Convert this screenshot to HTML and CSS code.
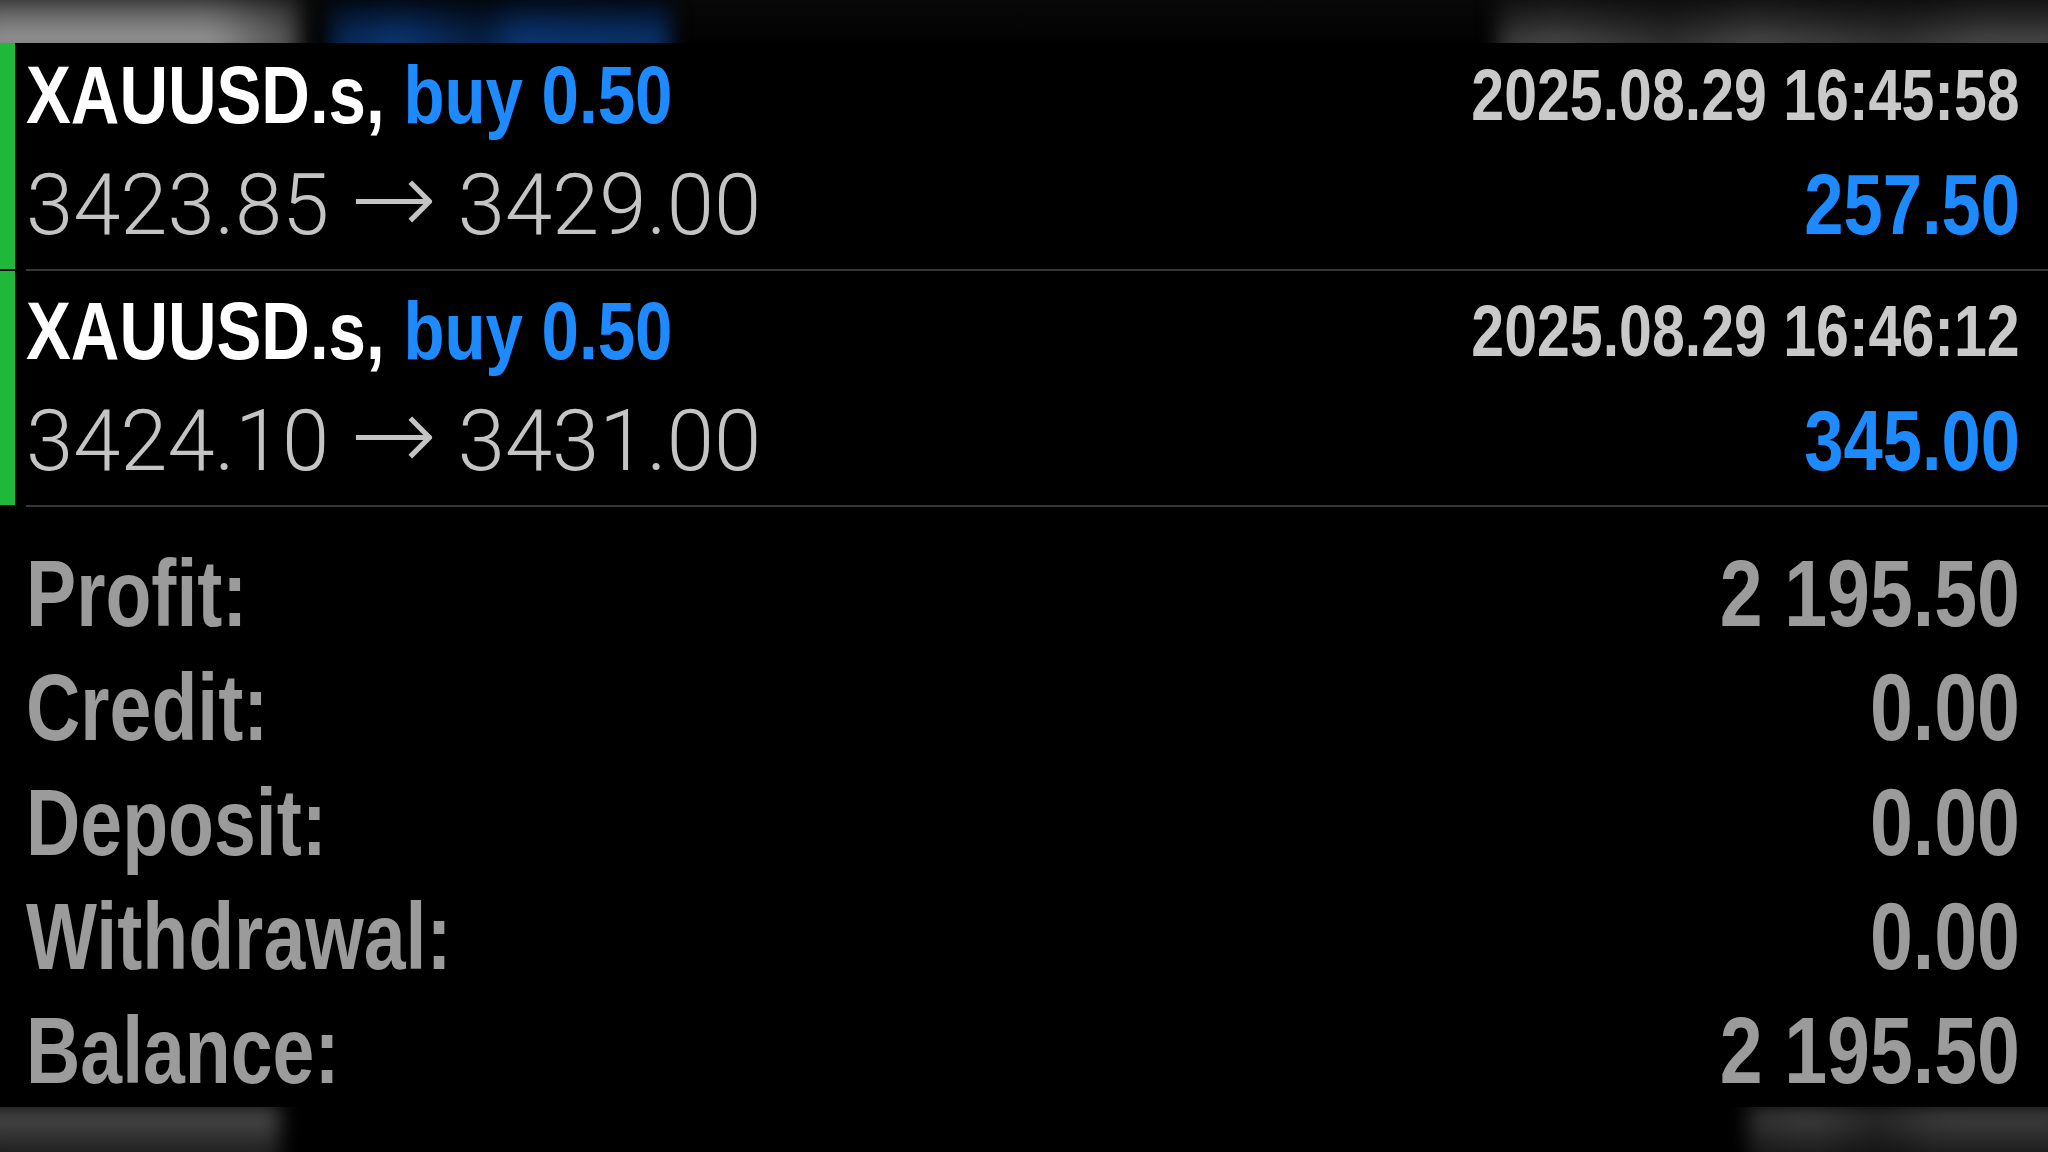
FILE: index.html
```html
<!DOCTYPE html>
<html>
<head>
<meta charset="utf-8">
<link rel="stylesheet" href="styles.css">
</head>
<body>
<div class="screen">
  <div class="ghost ghost-top">
    <div class="blob blob-gray-left"></div>
    <div class="blob blob-blue"></div>
    <div class="spacer"></div>
    <div class="blob blob-gray-right"></div>
  </div>

  <div class="trades">
    <div class="trade">
      <div class="bar"></div>
      <div class="trade-body">
        <div class="line-top">
          <div class="title cond-l"><span class="sym">XAUUSD.s,</span> <span class="side">buy 0.50</span></div>
          <div class="date cond-r">2025.08.29 16:45:58</div>
        </div>
        <div class="line-bottom">
          <div class="prices">3423.85 <span class="arrow">→</span> 3429.00</div>
          <div class="pnl cond-r">257.50</div>
        </div>
      </div>
    </div>
    <div class="trade">
      <div class="bar"></div>
      <div class="trade-body">
        <div class="line-top">
          <div class="title cond-l"><span class="sym">XAUUSD.s,</span> <span class="side">buy 0.50</span></div>
          <div class="date cond-r">2025.08.29 16:46:12</div>
        </div>
        <div class="line-bottom">
          <div class="prices">3424.10 <span class="arrow">→</span> 3431.00</div>
          <div class="pnl cond-r">345.00</div>
        </div>
      </div>
    </div>
  </div>

  <div class="summary">
    <div class="sum-row"><span class="cond-l lbl">Profit:</span><span class="cond-r">2 195.50</span></div>
    <div class="sum-row"><span class="cond-l lbl">Credit:</span><span class="cond-r">0.00</span></div>
    <div class="sum-row"><span class="cond-l lbl">Deposit:</span><span class="cond-r">0.00</span></div>
    <div class="sum-row"><span class="cond-l lbl">Withdrawal:</span><span class="cond-r">0.00</span></div>
    <div class="sum-row"><span class="cond-l lbl">Balance:</span><span class="cond-r">2 195.50</span></div>
  </div>

  <div class="ghost ghost-bottom">
    <div class="blob blob-bl"></div>
    <div class="spacer"></div>
    <div class="blob blob-br"></div>
  </div>
</div>
</body>
</html>
```

FILE: styles.css
```css
html, body {
  margin: 0;
  padding: 0;
  background: #000;
}

.screen {
  position: relative;
  width: 2048px;
  height: 1152px;
  overflow: hidden;
  background: #000;
  font-family: "Liberation Sans", Arial, sans-serif;
}

/* condensed bold look: horizontally squeezed glyphs */
.cond-l,
.cond-r {
  display: inline-block;
  white-space: nowrap;
  transform: scaleX(0.82);
}
.cond-l { transform-origin: left center; }
.cond-r { transform-origin: right center; }
.lbl { transform: scaleX(0.80); }

/* ghosted, blurred strips at the top and bottom edges */
.ghost {
  position: absolute;
  left: 0;
  right: 0;
  display: flex;
  overflow: hidden;
  background: #000;
  z-index: 2;
}
.ghost-top {
  top: 0;
  height: 43px;
  background: linear-gradient(to bottom, #080808, #020202);
}
.ghost-bottom {
  bottom: 0;
  height: 45px;
}
.spacer { flex: 1; }
.blob { filter: blur(10px); }

.blob-gray-left {
  width: 320px;
  margin-left: -20px;
  margin-top: -8px;
  height: 64px;
  background:
    linear-gradient(to right, rgba(0,0,0,0) 0%, rgba(0,0,0,0) 72%, rgba(0,0,0,0.5) 100%),
    linear-gradient(to bottom, #333 0%, #777 45%, #a8a8a8 100%);
}
.blob-blue {
  margin-left: 30px;
  width: 340px;
  margin-top: -8px;
  height: 64px;
  background:
    linear-gradient(to right, rgba(0,0,0,0.3), rgba(0,0,0,0) 20%, rgba(0,0,0,0.45) 45%, rgba(0,0,0,0) 55%, rgba(0,0,0,0.1) 100%),
    linear-gradient(to bottom, #000 0%, #07244f 45%, #0e4490 100%);
}
.blob-gray-right {
  width: 570px;
  margin-right: -20px;
  margin-top: -8px;
  height: 64px;
  background:
    linear-gradient(to right, rgba(0,0,0,0.2), rgba(0,0,0,0) 10%, rgba(0,0,0,0.35) 30%, rgba(0,0,0,0) 45%, rgba(0,0,0,0.3) 70%, rgba(0,0,0,0) 85%),
    linear-gradient(to bottom, #0e0e0e 0%, #2c2c2c 50%, #5e5e5e 100%);
}
.blob-bl {
  width: 300px;
  margin-left: -20px;
  height: 70px;
  background: linear-gradient(to bottom, #555 0%, #2a2a2a 50%, #0e0e0e 100%);
}
.blob-br {
  width: 320px;
  margin-right: -20px;
  height: 70px;
  background:
    linear-gradient(to right, rgba(0,0,0,0.2), rgba(0,0,0,0) 20%, rgba(0,0,0,0.35) 40%, rgba(0,0,0,0) 60%),
    linear-gradient(to bottom, #4a4a4a 0%, #262626 50%, #0e0e0e 100%);
}

/* trade rows */
.trades {
  margin-top: 35px;
}
.trade {
  display: flex;
}
.bar {
  width: 15px;
  flex: 0 0 15px;
  background: #20b83b;
  margin-bottom: 2px;
}
.trade-body {
  flex: 1;
  margin-left: 11px;
  padding: 10px 28px 4px 0;
  border-bottom: 2px solid #363636;
}
.line-top {
  display: flex;
  justify-content: space-between;
  align-items: flex-start;
  height: 100px;
}
.title {
  font-size: 82px;
  line-height: 100px;
  font-weight: 700;
}
.sym { color: #ffffff; }
.side { color: #1d8bff; }
.date {
  margin-top: 4px;
  font-size: 72px;
  line-height: 92px;
  font-weight: 700;
  color: #c9c9c9;
}
.line-bottom {
  display: flex;
  justify-content: space-between;
  align-items: baseline;
  height: 120px;
}
.prices {
  font-family: "Roboto", "Liberation Sans", sans-serif;
  font-weight: 300;
  font-size: 85px;
  line-height: 120px;
  color: #c4c4c4;
  white-space: nowrap;
}
.arrow {
  font-family: "DejaVu Sans", sans-serif;
  font-weight: 200;
  font-size: 104px;
  line-height: 0;
}
.pnl {
  font-size: 86px;
  line-height: 116px;
  font-weight: 700;
  color: #1d8bff;
}

/* summary */
.summary {
  padding: 30px 28px 0 26px;
}
.sum-row {
  display: flex;
  justify-content: space-between;
  font-size: 94px;
  line-height: 114.3px;
  height: 114.3px;
  font-weight: 700;
  color: #9b9b9b;
}
```
